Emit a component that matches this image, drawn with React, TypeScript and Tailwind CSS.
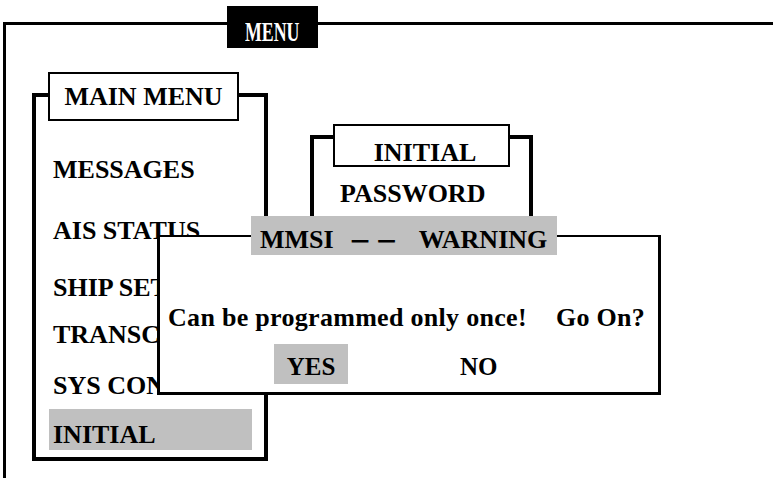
import React from "react";

const mainItems = [
  { label: "MESSAGES", mt: "mt-[23px]" },
  { label: "AIS STATUS", mt: "mt-[20px]" },
  { label: "SHIP SETTINGS", mt: "mt-[16px]" },
  { label: "TRANSCEIVER", mt: "mt-[6px]" },
  { label: "SYS CONFIG", mt: "mt-[10px]" },
  { label: "INITIAL", mt: "mt-[8px]", active: true },
];

export default function App() {
  return (
    <div className="relative w-[773px] h-[478px] overflow-hidden bg-white text-black font-bold font-['Liberation_Serif','Times_New_Roman',serif]">
      {/* outer MENU frame */}
      <div className="ml-[3px] mt-[22px] w-[770px] h-[456px] border-t-[3px] border-l-[3px] border-black flex flex-col">
        <div className="self-start ml-[221px] mt-[-19px] w-[91px] h-[42px] bg-black text-white text-center text-[27px] leading-[52px]">
          <span className="inline-block scale-x-[0.66]">MENU</span>
        </div>

        <div className="flex items-start mt-[45px] ml-[26px] gap-[42px]">
          {/* MAIN MENU */}
          <div className="w-[236px] border-4 border-black pb-[7px] flex flex-col">
            <div className="ml-[12px] mt-[-25px] w-[191px] h-[49px] border-2 border-black bg-white text-center text-[26px] leading-[45px] whitespace-nowrap">
              MAIN MENU
            </div>
            {mainItems.map((item) => (
              <div
                key={item.label}
                className={`${item.mt} ml-[13px] w-[203px] h-[41px] pl-[4px] text-[26px] leading-[52px] whitespace-nowrap ${
                  item.active ? "bg-[#c0c0c0]" : ""
                }`}
              >
                {item.label}
              </div>
            ))}
          </div>

          {/* INITIAL submenu */}
          <div className="mt-[42px] w-[223px] h-[160px] border-4 border-black flex flex-col items-start">
            <div className="ml-[19px] mt-[-15px] w-[177px] h-[43px] border-2 border-black bg-white pl-[7px] text-center text-[26px] leading-[54px]">
              INITIAL
            </div>
            <div className="ml-[26px] mt-[14px] text-[26px] leading-[26px]">PASSWORD</div>
          </div>
        </div>
      </div>

      {/* warning dialog */}
      <div className="absolute left-[157px] top-[235px] w-[504px] h-[160px] border-[3px] border-t-2 border-black bg-white flex flex-col items-start">
        <div className="ml-[91px] mt-[-21px] w-[306px] h-[39px] bg-[#c0c0c0] pl-[9px] text-[26px] leading-[48px] whitespace-nowrap">
          MMSI
          <span className="inline-block ml-[16px] text-[36px] leading-none translate-y-[5px]">−</span>
          <span className="inline-block ml-[6px] text-[36px] leading-none translate-y-[5px]">−</span>
          <span className="ml-[22px]">WARNING</span>
        </div>
        <div className="mt-[50px] pl-[8px] flex text-[26px] leading-[26px] tracking-[0.3px] whitespace-nowrap">
          <span>Can be programmed only once!</span>
          <span className="ml-[29px]">Go On?</span>
        </div>
        <div className="mt-[13px] flex items-start text-[25px] leading-[45px]">
          <div className="ml-[114px] w-[74px] h-[40px] bg-[#c0c0c0] text-center">YES</div>
          <div className="ml-[112px]">NO</div>
        </div>
      </div>
    </div>
  );
}
